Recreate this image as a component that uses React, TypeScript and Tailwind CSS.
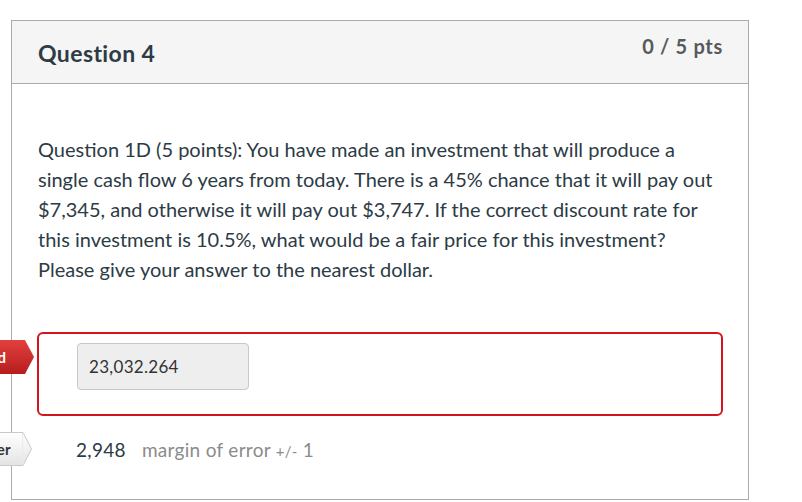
import type { ReactNode } from "react";

const FONT = { fontFamily: "Lato, 'Open Sans', sans-serif" };

function Tag({ tone, children, className }: { tone: "red" | "grey"; children: ReactNode; className: string }) {
  const red = tone === "red";
  return (
    <div className={`absolute right-full mr-[5px] flex h-[34px] items-center ${className}`}>
      <span
        className={`flex h-full items-center pl-3 text-[15px] font-bold whitespace-nowrap ${
          red
            ? "bg-gradient-to-b from-[#e2403f] to-[#b71c1c] pr-[19px] text-white"
            : "border-y border-[#c9c9c9] bg-gradient-to-b from-[#ffffff] to-[#e4e4e4] pr-[12px] text-[#333]"
        }`}
      >
        {children}
      </span>
      <svg width="10" height="34" viewBox="0 0 10 34" className="-ml-px block">
        <defs>
          <linearGradient id={`g-${tone}`} x1="0" y1="0" x2="0" y2="1">
            <stop offset="0" stopColor={red ? "#e2403f" : "#ffffff"} />
            <stop offset="1" stopColor={red ? "#b71c1c" : "#e4e4e4"} />
          </linearGradient>
        </defs>
        <polygon
          points={red ? "0,0 1,0 10,17 1,34 0,34" : "0,0.5 1,0.5 9.5,17 1,33.5 0,33.5"}
          fill={`url(#g-${tone})`}
          stroke={red ? "none" : "#c9c9c9"}
          strokeWidth="1"
        />
        {!red && <rect x="0" y="1" width="1.2" height="32" fill="#ececec" />}
      </svg>
    </div>
  );
}

export default function App() {
  return (
    <div className="h-[502px] w-[802px] overflow-hidden bg-white pt-5 text-[#2d3b45]" style={FONT}>
      <div className="ml-[11px] w-[738px] border border-[#ababab]">
        <div className="flex h-[63px] items-start justify-between border-b border-[#ababab] bg-[#f5f5f5] pr-[25px] pl-[26px]">
          <h2 className="pt-[18px] text-[23px] leading-[28px] font-bold tracking-[0.4px] text-[#2d3b45]">
            Question 4
          </h2>
          <span className="pt-[13px] text-[20px] leading-[24px] font-bold tracking-[0.7px] text-[#555a5e]">
            0 / 5 pts
          </span>
        </div>

        <div className="pt-[50px] pr-[25px] pb-[33px] pl-[25px]">
          <p className="pl-px text-[20px] leading-[30px]">
            Question 1D (5 points): You have made an investment that will produce a single cash flow 6 years
            from today. There is a 45% chance that it will pay out $7,345, and otherwise it will pay out $3,747.
            If the correct discount rate for this investment is 10.5%, what would be a fair price for this
            investment? Please give your answer to the nearest dollar.
          </p>

          <div className="relative mt-[48px] h-[84px] rounded-[6px] border-2 border-[#d3141c] pt-[9px] pl-[38px]">
            <Tag tone="red" className="top-[6px]">You Answered</Tag>
            <div className="flex h-[47px] w-[172px] items-center rounded-[4px] border border-[#c8c8c8] bg-[#eeeeee] px-[11px] text-[17px] tracking-[0.3px] text-[#333]">
              23,032.264
            </div>
          </div>

          <div className="relative mt-[16px] flex h-[34px] items-center pl-[39px] text-[19px] tracking-[0.3px]">
            <Tag tone="grey" className="top-0">Correct Answer</Tag>
            <span className="pt-[2px] text-[#2d3b45]">2,948</span>
            <span className="ml-4 pt-[2px] text-[#8b8b8b]">
              margin of error <span className="text-[15px]">+/-</span> 1
            </span>
          </div>
        </div>
      </div>
    </div>
  );
}
